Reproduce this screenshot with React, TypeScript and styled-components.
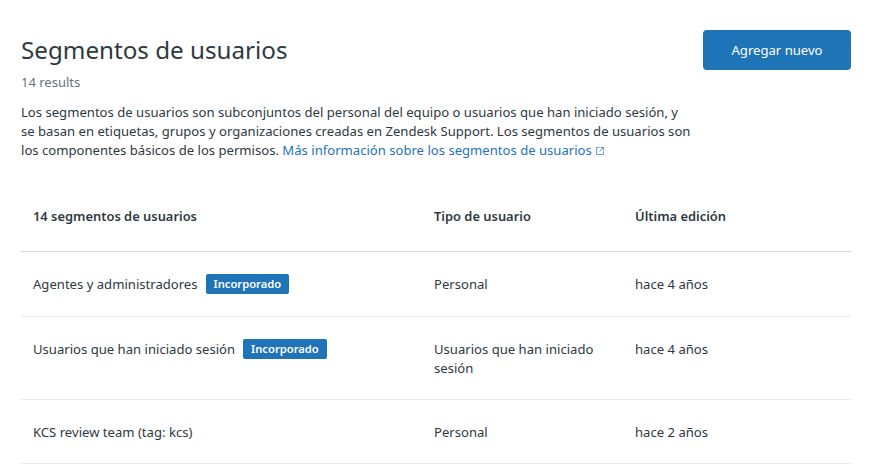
import React from "react";
import styled, {createGlobalStyle} from "styled-components";

const rows = [
  {name: "Agentes y administradores", builtIn: true, type: "Personal", edited: "hace 4 años"},
  {name: "Usuarios que han iniciado sesión", builtIn: true, type: "Usuarios que han iniciado sesión", edited: "hace 4 años"},
  {name: "KCS review team (tag: kcs)", builtIn: false, type: "Personal", edited: "hace 2 años"},
];

const App: React.FC = () => (
  <>
    <GlobalStyle/>
    <Page>
      <Header>
        <div>
          <Title>Segmentos de usuarios</Title>
          <Results>14 results</Results>
        </div>
        <AddButton>Agregar nuevo</AddButton>
      </Header>

      <Description>
        Los segmentos de usuarios son subconjuntos del personal del equipo o usuarios que han iniciado sesión, y
        se basan en etiquetas, grupos y organizaciones creadas en Zendesk Support. Los segmentos de usuarios son
        los componentes básicos de los permisos. <InfoLink href="#">Más información sobre los segmentos de usuarios<ExternalIcon/></InfoLink>
      </Description>

      <HeadRow>
        <HeadCell>14 segmentos de usuarios</HeadCell>
        <HeadCell>Tipo de usuario</HeadCell>
        <HeadCell>Última edición</HeadCell>
      </HeadRow>

      {rows.map((row) => (
        <Row key={row.name}>
          <NameCell>
            {row.name}
            {row.builtIn && <Badge>Incorporado</Badge>}
          </NameCell>
          <Cell>{row.type}</Cell>
          <Cell>{row.edited}</Cell>
        </Row>
      ))}
    </Page>
  </>
);

export default App;

const ExternalIcon: React.FC = () => (
  <LinkIcon viewBox="0 0 8 8" fill="none" stroke="currentColor" strokeWidth="1">
    <path d="M3.5 .5H.5v7h7V4.5"/>
    <path d="M4.5 .5h3v3M7.5 .5L3.5 4.5"/>
  </LinkIcon>
);

const GlobalStyle = createGlobalStyle`
  html, body {
    margin: 0;
    background: #fff;
  }

  body {
    font-family: "Noto Sans", "Open Sans", sans-serif;
    color: #2f3941;
  }
`;

const Page = styled.div`
  width: 872px;
  height: 470px;
  box-sizing: border-box;
  padding: 30px 21px 0;
  overflow: hidden;
`;

const Header = styled.div`
  display: flex;
  justify-content: space-between;
  align-items: flex-start;
`;

const Title = styled.h1`
  margin: 0;
  font-size: 24.2px;
  line-height: 40px;
  font-weight: 400;
  color: #2f3941;
`;

const Results = styled.div`
  margin-top: 3px;
  font-size: 13px;
  line-height: 18px;
  color: #68737d;
`;

const AddButton = styled.button`
  width: 148px;
  height: 40px;
  border: 0;
  border-radius: 4px;
  background: #1f73b7;
  color: #fff;
  font: 400 13.1px/40px "Noto Sans", sans-serif;
  padding: 0;
`;

const Description = styled.p`
  margin: 12px 0 0;
  width: 672px;
  font-size: 13.1px;
  line-height: 19px;
  color: #2f3941;
`;

const InfoLink = styled.a`
  color: #1f73b7;
  text-decoration: none;
`;

const LinkIcon = styled.svg`
  width: 8px;
  height: 8px;
  margin-left: 4px;
  opacity: 0.7;
`;

const HeadRow = styled.div`
  display: grid;
  grid-template-columns: 401px 201px 1fr;
  margin-top: 20px;
  height: 71px;
  align-items: center;
  border-bottom: 1px solid #d8dcde;
`;

const HeadCell = styled.div`
  padding: 0 12px;
  font-size: 12.9px;
  line-height: 20px;
  font-weight: 600;
`;

const Row = styled.div`
  display: grid;
  grid-template-columns: 401px 201px 1fr;
  align-items: start;
  padding: 22px 0 21px;
  border-bottom: 1px solid #e9ebed;
`;

const Cell = styled.div`
  padding: 1px 12px 0;
  font-size: 13.1px;
  line-height: 19px;
`;

const NameCell = styled(Cell)`
  display: flex;
  align-items: flex-start;
`;

const Badge = styled.span`
  margin: -1px 0 1px 8px;
  height: 20px;
  padding: 0 8px;
  border-radius: 2px;
  background: #1f73b7;
  color: #fff;
  font-size: 11.2px;
  line-height: 20px;
  font-weight: 600;
`;
